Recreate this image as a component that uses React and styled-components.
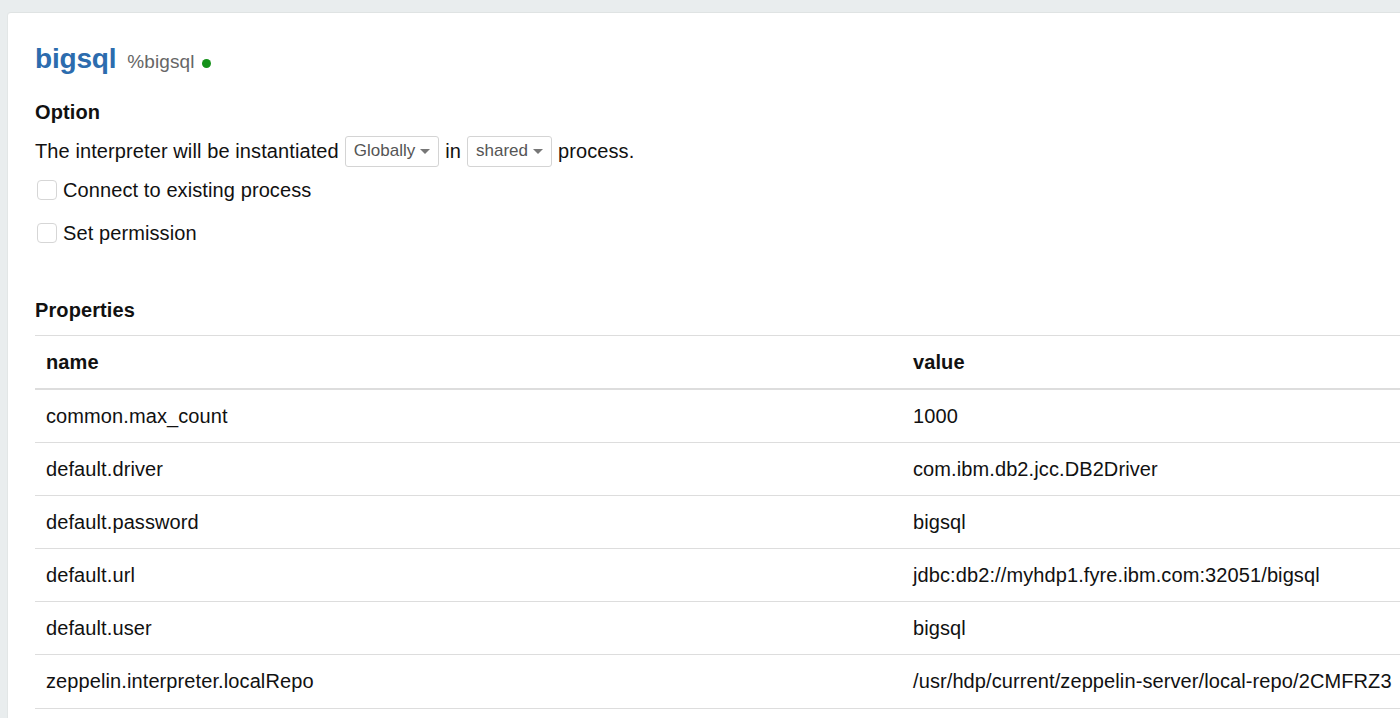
import React from 'react';
import styled, { createGlobalStyle } from 'styled-components';

const GlobalStyle = createGlobalStyle`
  html, body {
    margin: 0;
    padding: 0;
    background: #e9edee;
    overflow: hidden;
    font-family: 'Liberation Sans', Arial, sans-serif;
    color: #111;
  }
`;

const rows = [
  ['common.max_count', '1000'],
  ['default.driver', 'com.ibm.db2.jcc.DB2Driver'],
  ['default.password', 'bigsql'],
  ['default.url', 'jdbc:db2://myhdp1.fyre.ibm.com:32051/bigsql'],
  ['default.user', 'bigsql'],
  ['zeppelin.interpreter.localRepo', '/usr/hdp/current/zeppelin-server/local-repo/2CMFRZ3'],
];

export default function App() {
  return (
    <>
      <GlobalStyle />
      <Page>
        <Panel>
          <TitleRow>
            <Title>bigsql</Title>
            <Tag>%bigsql</Tag>
            <Dot />
          </TitleRow>

          <Heading>Option</Heading>
          <Sentence>
            The interpreter will be instantiated
            <Select>Globally<Caret /></Select>
            in
            <Select>shared<Caret /></Select>
            process.
          </Sentence>
          <CheckRow gap={10}>
            <Box />
            Connect to existing process
          </CheckRow>
          <CheckRow gap={15}>
            <Box />
            Set permission
          </CheckRow>

          <Heading gap={49}>Properties</Heading>
          <Table>
            <colgroup>
              <NameCol />
              <col />
            </colgroup>
            <thead>
              <tr>
                <Th>name</Th>
                <Th>value</Th>
              </tr>
            </thead>
            <tbody>
              {rows.map(([k, v]) => (
                <tr key={k}>
                  <Td>{k}</Td>
                  <Td>{v}</Td>
                </tr>
              ))}
            </tbody>
          </Table>
        </Panel>
      </Page>
    </>
  );
}

// styled components:

const Page = styled.div`
  padding: 12px 0 0 7px;
  height: 706px;
  overflow: hidden;
`;

const Panel = styled.div`
  width: 1500px;
  min-height: 800px;
  background: #fff;
  border-top: 1px solid #dfe3e3;
  border-left: 1px solid #e2e6e6;
  border-radius: 4px 0 0 0;
  padding: 30px 0 0 27px;
  box-sizing: border-box;
  letter-spacing: 0.1px;
`;

const TitleRow = styled.div`
  display: flex;
  align-items: baseline;
  height: 31px;
  line-height: 31px;
`;

const Title = styled.span`
  font-size: 28px;
  font-weight: bold;
  color: #2c6cae;
  letter-spacing: -0.2px;
`;

const Tag = styled.span`
  font-size: 19px;
  color: #666;
  margin-left: 11px;
`;

const Dot = styled.span`
  display: inline-block;
  width: 9px;
  height: 9px;
  border-radius: 50%;
  background: #15921a;
  margin-left: 7px;
  align-self: center;
  margin-top: 9px;
`;

const Heading = styled.div`
  font-size: 20px;
  font-weight: bold;
  line-height: 28px;
  margin-top: ${p => p.gap || 24}px;
`;

const Sentence = styled.div`
  display: flex;
  align-items: center;
  gap: 6px;
  font-size: 20px;
  height: 30px;
  margin-top: 10px;
`;

const Select = styled.span`
  display: inline-flex;
  align-items: center;
  height: 31px;
  box-sizing: border-box;
  padding: 0 8px;
  border: 1px solid #d4d4d4;
  border-radius: 3px;
  font-size: 17px;
  letter-spacing: 0;
  color: #555;
`;

const Caret = styled.span`
  display: inline-block;
  margin-left: 5px;
  width: 0;
  height: 0;
  border-left: 5px solid transparent;
  border-right: 5px solid transparent;
  border-top: 5px solid #777;
`;

const CheckRow = styled.div`
  display: flex;
  align-items: center;
  height: 28px;
  font-size: 20px;
  margin-top: ${p => p.gap}px;
  padding-left: 2px;
`;

const Box = styled.span`
  width: 20px;
  height: 20px;
  box-sizing: border-box;
  border: 1px solid #d6d6d6;
  border-radius: 4px;
  margin-right: 6px;
  background: #fff;
`;

const Table = styled.table`
  margin-top: 11px;
  width: 100%;
  table-layout: fixed;
  border-collapse: collapse;
  font-size: 20px;
`;

const NameCol = styled.col`
  width: 867px;
`;

const Th = styled.th`
  text-align: left;
  font-weight: bold;
  padding: 0 11px;
  height: 52px;
  border-top: 1px solid #ddd;
  border-bottom: 2px solid #ddd;
`;

const Td = styled.td`
  padding: 0 11px;
  height: 52.1px;
  white-space: nowrap;
  overflow: hidden;
  border-bottom: 1px solid #ddd;
`;
